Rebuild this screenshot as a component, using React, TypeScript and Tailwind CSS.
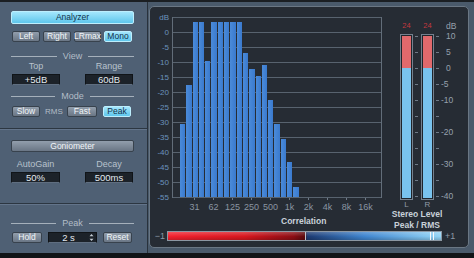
import React from "react";

const bars = [73, 112, 175, 175, 136, 175, 175, 175, 175, 175, 144, 128, 121, 132, 97, 73, 58, 35, 10];
const yLabels = ["dB", "0", "-5", "-10", "-15", "-20", "-25", "-30", "-35", "-40", "-45", "-50", "-55"];
const xLabels = ["31", "62", "125", "250", "500", "1k", "2k", "4k", "8k", "16k"];
const meterLabels = ["10", "5", "0", "-5", "-10", "", "-20", "", "-30", "", "-40"];
const ticks = Array.from({ length: 11 }, (_, i) => i);

function Btn({ label, active = false, className = "" }: { label: string; active?: boolean; className?: string }) {
  const base = "flex items-center justify-center rounded-[2px] border text-[8.5px] leading-none";
  const look = active
    ? "bg-[linear-gradient(to_bottom,#a3e6fc,#5ec6ec)] border-[#bdeefd] text-[#12324a]"
    : "bg-[linear-gradient(to_bottom,#929eac,#6a7685)] border-[#38424d] text-[#f1f5f8]";
  return <div className={`${base} ${look} ${className}`}>{label}</div>;
}

function Val({ label, className = "" }: { label: string; className?: string }) {
  return (
    <div
      className={`flex items-center justify-center border border-[#101418] border-b-[#5f6e80] bg-[#1c2229] text-[9.5px] leading-none text-[#e2e8ee] ${className}`}
    >
      {label}
    </div>
  );
}

function Sep({ label, className = "" }: { label: string; className?: string }) {
  return (
    <div className={`ml-[11px] flex h-[10px] w-[123px] items-center gap-[6px] ${className}`}>
      <div className="h-px flex-1 bg-[#a5b0bb]" />
      <span className="text-[9px] leading-[10px] text-[#b3bdc7]">{label}</span>
      <div className="h-px flex-1 bg-[#a5b0bb]" />
    </div>
  );
}

function LeftPanel() {
  return (
    <div className="flex h-full w-[148px] flex-col border-r border-[#29323c] bg-[#4f6074]">
      {/* Analyzer section */}
      <div className="flex h-[127px] flex-col border-b border-[#2c3641]">
        <Btn label="Analyzer" active className="ml-[11px] mt-[9px] h-[13px] w-[123px] text-[8.5px]" />
        <div className="ml-[12px] mt-[7px] flex gap-[3px]">
          <Btn label="Left" className="h-[11px] w-[28px]" />
          <Btn label="Right" className="h-[11px] w-[28px]" />
          <Btn label="LRmax" className="h-[11px] w-[27px]" />
          <Btn label="Mono" active className="h-[11px] w-[28px]" />
        </div>
        <Sep label="View" className="mt-[9px]" />
        <div className="flex">
          <div className="ml-[12px] flex w-[48px] flex-col items-center">
            <span className="h-[10px] text-[9px] leading-[10px] text-[#b8c2cc]">Top</span>
            <Val label="+5dB" className="mt-[3px] h-[11px] w-[48px]" />
          </div>
          <div className="ml-[25px] flex w-[48px] flex-col items-center">
            <span className="h-[10px] text-[9px] leading-[10px] text-[#b8c2cc]">Range</span>
            <Val label="60dB" className="mt-[3px] h-[11px] w-[48px]" />
          </div>
        </div>
        <Sep label="Mode" className="mt-[6px]" />
        <div className="ml-[12px] mt-[5px] flex items-center">
          <Btn label="Slow" className="h-[11px] w-[28px]" />
          <span className="ml-[5px] w-[19px] text-[8px] leading-none text-[#b3bdc7]">RMS</span>
          <Btn label="Fast" className="ml-[3px] h-[11px] w-[30px]" />
          <Btn label="Peak" active className="ml-[6px] h-[11px] w-[28px]" />
        </div>
      </div>

      {/* Goniometer section */}
      <div className="flex h-[75px] flex-col border-b border-t border-b-[#2c3641] border-t-[#63748a]">
        <Btn label="Goniometer" className="ml-[11px] mt-[10px] h-[12px] w-[123px]" />
        <div className="mt-[7px] flex">
          <div className="ml-[11px] flex w-[49px] flex-col items-center">
            <span className="h-[10px] text-[9px] leading-[10px] text-[#b8c2cc]">AutoGain</span>
            <Val label="50%" className="mt-[3px] h-[11px] w-[49px]" />
          </div>
          <div className="ml-[25px] flex w-[48px] flex-col items-center">
            <span className="h-[10px] text-[9px] leading-[10px] text-[#b8c2cc]">Decay</span>
            <Val label="500ms" className="mt-[3px] h-[11px] w-[48px]" />
          </div>
        </div>
      </div>

      {/* Peak section */}
      <div className="flex flex-1 flex-col border-t border-[#63748a]">
        <Sep label="Peak" className="mt-[13px]" />
        <div className="ml-[12px] mt-[4px] flex items-center">
          <Btn label="Hold" className="h-[11px] w-[30px]" />
          <div className="ml-[6px] flex h-[11px] w-[49px] items-center border border-[#101418] border-b-[#5f6e80] bg-[#1c2229]">
            <span className="flex-1 text-center text-[9.5px] leading-none text-[#e2e8ee]">2 s</span>
            <svg width="7" height="9" viewBox="0 0 7 9" className="mr-[1px]">
              <path d="M3.5 1 L5.5 3.2 L1.5 3.2 Z" fill="#c5cdd5" />
              <path d="M3.5 8 L5.5 5.8 L1.5 5.8 Z" fill="#c5cdd5" />
            </svg>
          </div>
          <Btn label="Reset" className="ml-[6px] h-[11px] w-[29px]" />
        </div>
      </div>
    </div>
  );
}

function Tube({ label }: { label: string }) {
  return (
    <div className="flex w-[13px] flex-col items-center">
      <div className="flex h-[166px] w-[13px] flex-col border border-[#75818e] bg-[#1f252c] p-px">
        <div className="h-[32px] bg-[#e1696c]" />
        <div className="flex-1 bg-[#79c3ee]" />
      </div>
      <span className="h-[8px] text-[8px] leading-[9px] text-[#8f9aa6]">{label}</span>
    </div>
  );
}

function TickCol({ w }: { w: string }) {
  return (
    <div className={`flex flex-col gap-[15px] pt-[2px] ${w}`}>
      {ticks.map((t) => (
        <div key={t} className="ml-[2px] h-px w-[3px] bg-[#6f7a87]" />
      ))}
    </div>
  );
}

function Display() {
  return (
    <div className="flex h-full w-full flex-col rounded-[5px] border border-[#6a7784] bg-[#262c34]">
      <div className="flex h-[224px]">
        {/* Spectrum */}
        <div className="flex w-[232px] flex-col">
          <div className="mt-[10px] flex h-[181px] items-start">
            <div className="-mt-[7px] flex w-[19px] flex-col items-end">
              {yLabels.map((l) => (
                <div key={l} className="h-[15px] text-[8px] leading-[15px] text-[#6b93bd]">
                  {l}
                </div>
              ))}
            </div>
            <div className="ml-[3px] h-[181px] w-[210px] border-x border-[#626d79] bg-[repeating-linear-gradient(to_bottom,#58636f_0px,#58636f_1px,transparent_1px,transparent_15px)]">
              <div className="flex h-[180px] items-end gap-px pl-[7px]">
                {bars.map((h, i) => (
                  <div
                    key={i}
                    className="w-[5.3px] flex-none bg-[linear-gradient(to_right,#4b8bd9,#3a7ace)]"
                    style={{ height: `${h}px` }}
                  />
                ))}
              </div>
            </div>
          </div>
          <div className="flex pl-[35px]">
            {xLabels.map((l) => (
              <div key={l} className="flex w-[19px] flex-col items-center">
                <div className="h-[2px] w-px bg-[#6f7a86]" />
                <span className="mt-[2px] text-[9px] leading-[10px] text-[#8a95a1]">{l}</span>
              </div>
            ))}
          </div>
          <div className="mt-[4px] pl-[131px] text-[8.5px] font-bold leading-[10px] text-[#c9d1d9]">Correlation</div>
        </div>

        {/* Stereo level meters */}
        <div className="flex flex-1 flex-col">
          <div className="mt-[14px] flex h-[10px] items-center pl-[18px] text-[7.5px] leading-none">
            <span className="w-[13px] text-center text-[#c3383f]">24</span>
            <span className="w-[8px]" />
            <span className="w-[13px] text-center text-[#c3383f]">24</span>
            <span className="w-[12px]" />
            <span className="text-[8.5px] text-[#96a1ad]">dB</span>
          </div>
          <div className="mt-[3px] flex h-[174px] items-start pl-[18px]">
            <Tube label="L" />
            <TickCol w="w-[8px]" />
            <Tube label="R" />
            <TickCol w="w-[12px]" />
            <div className="-mt-[6px] flex flex-col">
              {meterLabels.map((l, i) => (
                <div key={i} className="h-[16px] text-[8.5px] leading-[16px] text-[#96a1ad]">
                  {l.startsWith("-") ? <span className="-ml-[5px]">{l}</span> : l}
                </div>
              ))}
            </div>
          </div>
          <div className="mt-[1px] w-[70px] text-center text-[8.5px] font-bold leading-[11px] text-[#c9d1d9]">
            <div>Stereo Level</div>
            <div>Peak / RMS</div>
          </div>
        </div>
      </div>

      {/* Correlation bar */}
      <div className="flex h-[10px] items-center pl-[3px]">
        <span className="w-[12px] text-right text-[9px] leading-none text-[#8d98a4]">−1</span>
        <div className="relative ml-[2px] h-[10px] w-[275px] border border-[#8c97a3] bg-[linear-gradient(to_bottom,rgba(255,255,255,0.22),rgba(255,255,255,0)_55%,rgba(0,0,0,0.18)),linear-gradient(to_right,#f2222f_0%,#d8171f_28%,#8c0d14_46%,#5c0a0e_50%,#1c3a72_51%,#3f85cf_72%,#93d5f6_100%)]">
          <div className="absolute left-[137px] top-0 h-full w-px bg-[#b9c2cc]" />
          <div className="absolute left-[262px] top-0 h-full w-px bg-[#f4f8fb]" />
          <div className="absolute left-[265px] top-0 h-full w-px bg-[#f4f8fb]" />
        </div>
        <span className="ml-[3px] text-[9px] leading-none text-[#8d98a4]">+1</span>
      </div>
    </div>
  );
}

export default function App() {
  return (
    <div className="flex h-[258px] w-[474px] flex-col overflow-hidden bg-[#121518] font-['Liberation_Sans',Arial,sans-serif]">
      <div className="h-[2px] bg-[#1b1f23]" />
      <div className="flex h-[251px] bg-[#4a5a6b]">
        <LeftPanel />
        <div className="flex-1 pb-[5px] pl-[1px] pr-[5px] pt-[4px]">
          <Display />
        </div>
      </div>
      <div className="flex-1 bg-[#111417]" />
    </div>
  );
}
